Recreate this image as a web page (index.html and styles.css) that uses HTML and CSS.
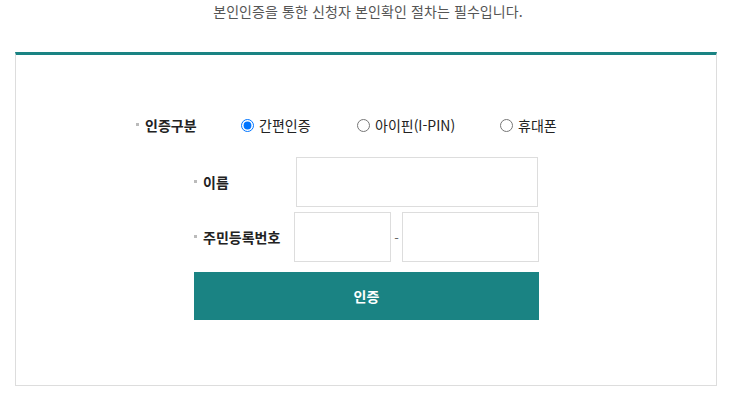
FILE: index.html
```html
<!DOCTYPE html>
<html lang="ko">
<head>
  <meta charset="UTF-8">
  <meta name="viewport" content="width=device-width, initial-scale=1.0">
  <title>본인인증</title>
  <link rel="stylesheet" href="styles.css">
</head>
<body>
  <p class="notice">본인인증을 통한 신청자 본인확인 절차는 필수입니다.</p>

  <div class="auth-box">
    <div class="type-row">
      <span class="label">인증구분</span>
      <label class="option"><input type="radio" name="authType" checked> 간편인증</label>
      <label class="option"><input type="radio" name="authType"> 아이핀(I-PIN)</label>
      <label class="option"><input type="radio" name="authType"> 휴대폰</label>
    </div>

    <div class="form">
      <div class="form-row">
        <span class="label">이름</span>
        <input type="text" class="field field-name">
      </div>
      <div class="form-row">
        <span class="label">주민등록번호</span>
        <input type="text" class="field field-front">
        <span class="dash">-</span>
        <input type="password" class="field field-back">
      </div>
      <button class="submit">인증</button>
    </div>
  </div>
</body>
</html>
```

FILE: styles.css
```css
body {
  margin: 0;
  padding: 0;
  font-family: "Noto Sans CJK KR", "Noto Sans", sans-serif;
  color: #222;
  background: #fff;
}

.notice {
  margin: 0;
  padding-top: 1px;
  height: 51px;
  font-size: 14px;
  line-height: 20px;
  color: #555;
  text-align: center;
  letter-spacing: 0.1px;
}

.auth-box {
  margin: 0 19px 0 15px;
  border: 1px solid #ddd;
  border-top: 3px solid #1a8383;
  height: 334px;
  box-sizing: border-box;
  padding-top: 58px;
}

.label {
  position: relative;
  padding-left: 9px;
  font-size: 14px;
  font-weight: bold;
  color: #222;
}

.label::before {
  content: "";
  position: absolute;
  left: 0;
  top: 50%;
  width: 3px;
  height: 3px;
  margin-top: -2px;
  background: #bbb;
}

.type-row {
  display: flex;
  align-items: center;
  height: 24px;
  padding-left: 120px;
}

.type-row .label {
  width: 96px;
}

.option {
  display: flex;
  align-items: center;
  font-size: 14px;
  color: #222;
}

.option input {
  margin: 0 5px 0 0;
  width: 13px;
  height: 13px;
}

.option:nth-of-type(1) {
  width: 116px;
}

.option:nth-of-type(2) {
  width: 143px;
}

.form {
  width: 345px;
  margin: 20px 0 0 178px;
}

.form-row {
  display: flex;
  align-items: center;
  margin-bottom: 5px;
}

.form-row .label {
  width: 92px;
}

.field {
  height: 50px;
  box-sizing: border-box;
  border: 1px solid #ddd;
  background: #fff;
  margin: 0;
  padding: 0 8px;
}

.field-name {
  width: 242px;
  margin-left: 1px;
}

.field-front {
  width: 97px;
}

.dash {
  width: 11px;
  text-align: center;
  font-size: 13px;
  color: #666;
}

.field-back {
  width: 137px;
}

.submit {
  display: block;
  width: 345px;
  height: 48px;
  margin-top: 10px;
  border: none;
  background: #1a8383;
  color: #fff;
  font-family: inherit;
  font-size: 14px;
  font-weight: bold;
  cursor: pointer;
}
```
